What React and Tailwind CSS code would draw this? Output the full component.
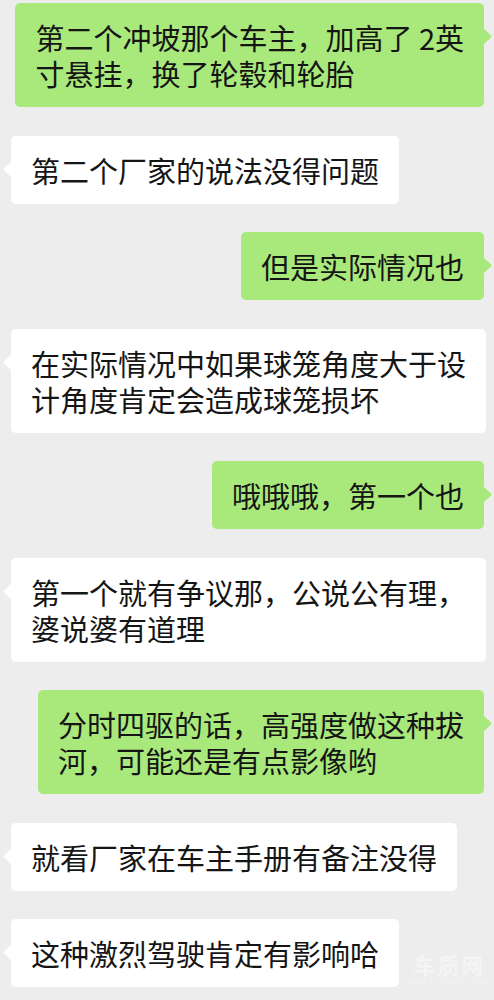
import React from "react";

const msgs = [
  { me: true, lines: ["第二个冲坡那个车主，加高了 2英", "寸悬挂，换了轮毂和轮胎"] },
  { me: false, lines: ["第二个厂家的说法没得问题"] },
  { me: true, lines: ["但是实际情况也"] },
  { me: false, lines: ["在实际情况中如果球笼角度大于设", "计角度肯定会造成球笼损坏"] },
  { me: true, lines: ["哦哦哦，第一个也"] },
  { me: false, lines: ["第一个就有争议那，公说公有理，", "婆说婆有道理"] },
  { me: true, lines: ["分时四驱的话，高强度做这种拔", "河，可能还是有点影像哟"] },
  { me: false, lines: ["就看厂家在车主手册有备注没得"] },
  { me: false, lines: ["这种激烈驾驶肯定有影响哈"] },
];

function Bubble({ me, lines }) {
  return (
    <div
      className={
        "relative w-fit rounded-[5px] px-5 py-4 text-[29px] leading-[36px] whitespace-nowrap text-[#151515] " +
        (me ? "self-end mr-[10px] bg-[#a9e97b]" : "self-start ml-[11px] bg-white")
      }
    >
      {lines.map((l, i) => (
        <div key={i} className="h-[36px]">{l}</div>
      ))}
      {me ? (
        <svg className="absolute right-[-8px] top-[26px]" width="8" height="15" viewBox="0 0 8 15">
          <path d="M0 0 L7 6.5 Q8 7.5 7 8.5 L0 15 Z" fill="#a9e97b" />
        </svg>
      ) : (
        <svg className="absolute left-[-8px] top-[26px]" width="8" height="15" viewBox="0 0 8 15">
          <path d="M8 0 L1 6.5 Q0 7.5 1 8.5 L8 15 Z" fill="#ffffff" />
        </svg>
      )}
    </div>
  );
}

export default function App() {
  return (
    <div
      className="relative w-[494px] h-[1000px] overflow-hidden bg-[#ededed]"
      style={{ fontFamily: '"Noto Sans CJK SC", "Noto Sans", sans-serif' }}
    >
      <div className="flex flex-col gap-[28.5px] pt-[3px]">
        {msgs.map((m, i) => (
          <Bubble key={i} {...m} />
        ))}
      </div>
      <div className="absolute right-[4px] bottom-[14px] flex flex-col items-center gap-[3px] text-white opacity-40 pointer-events-none">
        <span className="text-[22px] leading-[24px] font-bold tracking-[2px]">车质网</span>
        <span className="text-[6px] leading-[7px] tracking-[1px]">WWW.12365AUTO.COM</span>
      </div>
    </div>
  );
}
